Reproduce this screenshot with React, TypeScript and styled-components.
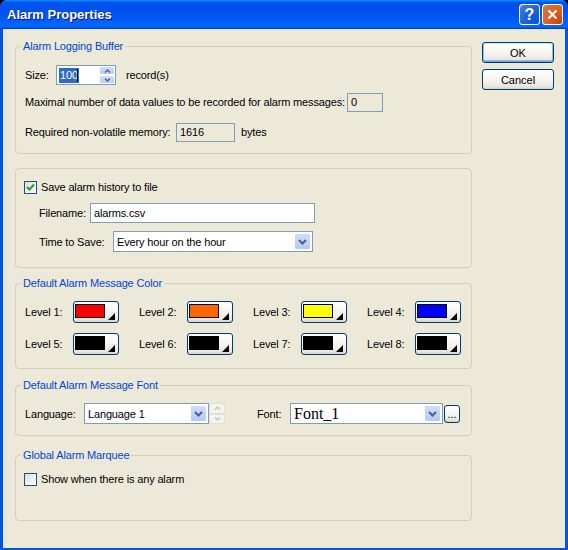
import React from 'react';
import styled, { createGlobalStyle, css } from 'styled-components';

const FONT = `"Liberation Sans", Arial, sans-serif`;

const GlobalStyle = createGlobalStyle`
  html, body {
    margin: 0;
    padding: 0;
    background: #000;
  }
  body {
    width: 568px;
    height: 550px;
    overflow: hidden;
  }
`;

const Window = styled.div`
  width: 568px;
  height: 550px;
  display: flex;
  flex-direction: column;
  background: #0054e3;
  border-radius: 7px 7px 0 0;
  overflow: hidden;
  font-family: ${FONT};
  font-size: 11px;
  letter-spacing: -0.15px;
  color: #000;
`;

const TitleBar = styled.div`
  height: 29px;
  flex: none;
  display: flex;
  align-items: center;
  padding: 0 5px 0 7px;
  background: linear-gradient(180deg, #0997ff, #0053ee 8%, #0050ee 40%, #06f 88%, #06f 93%, #005bff 95%, #003dd7 96%, #003dd7);
`;

const TitleText = styled.div`
  flex: 1;
  color: #fff;
  font: bold 13px ${FONT};
  text-shadow: 1px 1px #0f1089;
  letter-spacing: 0;
`;

const TitleButton = styled.div<{ $kind: 'help' | 'close' }>`
  width: 21px;
  height: 21px;
  box-sizing: border-box;
  margin-left: 2px;
  border: 1px solid #fff;
  border-radius: 3px;
  display: flex;
  align-items: center;
  justify-content: center;
  color: #fff;
  font: bold 16px ${FONT};
  letter-spacing: 0;
  ${p => p.$kind === 'help'
    ? css`background: radial-gradient(circle at 90% 90%, #0054e9 0%, #2263d5 55%, #4479e4 90%, #fff 100%);`
    : css`background: radial-gradient(circle at 90% 90%, #cc4600 0%, #dc6527 55%, #cd7546 90%, #fff 100%);`}
`;

const Body = styled.div`
  flex: 1;
  margin: 0 3px 2px;
  background: #ece9d8;
  display: flex;
  gap: 10px;
  padding-left: 12px;
`;

const LeftColumn = styled.div`
  width: 457px;
  display: flex;
  flex-direction: column;
`;

const RightColumn = styled.div`
  display: flex;
  flex-direction: column;
  gap: 6px;
  padding-top: 13px;
`;

const Group = styled.fieldset<{ $top: number; $h: number }>`
  box-sizing: border-box;
  margin: ${p => p.$top}px 0 0;
  height: ${p => p.$h}px;
  border: 1px solid #d0d0bf;
  border-radius: 4px;
  padding: 0 8px 0 9px;
  min-width: 0;
`;

const Legend = styled.legend`
  color: #0046d5;
  font: 11px ${FONT};
  letter-spacing: -0.15px;
  line-height: 14px;
  padding: 0 2px;
  margin-left: -4px;
`;

const Row = styled.div<{ $top: number; $h: number; $indent?: number }>`
  display: flex;
  align-items: center;
  height: ${p => p.$h}px;
  margin-top: ${p => p.$top}px;
  padding-left: ${p => p.$indent || 0}px;
  white-space: nowrap;
`;

const Label = styled.span<{ $w?: number; $gap?: number }>`
  flex: none;
  ${p => p.$w && css`width: ${p.$w}px;`}
  margin-left: ${p => p.$gap || 0}px;
`;

const Field = styled.div<{ $w: number; $h: number; $readOnly?: boolean }>`
  box-sizing: border-box;
  width: ${p => p.$w}px;
  height: ${p => p.$h}px;
  border: 1px solid #7f9db9;
  background: ${p => (p.$readOnly ? '#ece9d8' : '#fff')};
  display: flex;
  align-items: center;
  padding-left: 3px;
  flex: none;
`;

const Selected = styled.span`
  background: #316ac5;
  color: #fff;
  line-height: 15px;
  padding: 0 1px;
  margin-left: -1px;
`;

const Caret = styled.span`
  width: 1px;
  height: 13px;
  background: #000;
  margin-left: -2px;
`;

const Spacer = styled.div`
  flex: 1;
`;

const SpinStack = styled.div`
  display: flex;
  flex-direction: column;
  height: 100%;
`;

const SpinHalf = styled.div<{ $disabled?: boolean }>`
  box-sizing: border-box;
  width: 16px;
  flex: 1;
  display: flex;
  align-items: center;
  justify-content: center;
  border: 1px solid ${p => (p.$disabled ? '#e2e0d6' : '#fff')};
  border-radius: 2px;
  background: ${p => (p.$disabled ? '#f4f3ee' : 'linear-gradient(180deg, #d3defb, #b6cbf9)')};
`;

const ComboArrow = styled.div`
  box-sizing: border-box;
  width: 17px;
  height: calc(100% - 2px);
  margin: 1px;
  border: 1px solid #fff;
  border-radius: 2px;
  background: linear-gradient(180deg, #d0ddfc, #b5c9f7);
  display: flex;
  align-items: center;
  justify-content: center;
`;

const XPButton = styled.button<{ $w: number; $h: number; $default?: boolean }>`
  box-sizing: border-box;
  width: ${p => p.$w}px;
  height: ${p => p.$h}px;
  flex: none;
  border: 1px solid #003c74;
  border-radius: 3px;
  background: linear-gradient(180deg, #fff, #f3f2ee 60%, #e8e6dd 88%, #d6d0c5);
  font: 11px ${FONT};
  color: #000;
  padding: 0;
  display: flex;
  align-items: center;
  justify-content: center;
  position: relative;
  ${p => p.$default && css`
    box-shadow: inset 0 1px #cee7ff, inset 1px 0 #98b8ea, inset -1px 0 #98b8ea, inset 0 -1px #69a1e8, inset 0 -2px #98b8ea;
  `}
`;

const Swatch = styled.div<{ $color: string }>`
  width: 30px;
  height: 14px;
  box-sizing: border-box;
  border: 1px solid #000;
  background: ${p => p.$color};
  margin: -2px 9px 0 -3px;
`;

const Corner = styled.svg`
  position: absolute;
  right: 3px;
  bottom: 2px;
`;

const ColorGrid = styled.div`
  display: grid;
  grid-template-columns: repeat(4, 114px);
  row-gap: 10px;
  margin-top: 11px;
`;

const ColorCell = styled.div`
  display: flex;
  align-items: center;
  height: 22px;
`;

const CheckBox = styled.div`
  box-sizing: border-box;
  width: 13px;
  height: 13px;
  border: 1px solid #1c5180;
  background: linear-gradient(135deg, #dcdcd7, #fff);
  margin: 0 4px 0 -1px;
  display: flex;
  align-items: center;
  justify-content: center;
  flex: none;
`;

const SerifValue = styled.span`
  font: 16px "Liberation Serif", "Times New Roman", serif;
  letter-spacing: 0;
`;

const Chevron = () => (
  <svg width="9" height="6" viewBox="0 0 9 6">
    <polyline points="1,1 4.5,4.5 8,1" fill="none" stroke="#4d6185" strokeWidth="2" />
  </svg>
);

const SpinArrow = ({ up, color }: { up: boolean; color: string }) => (
  <svg width="7" height="4" viewBox="0 0 7 4">
    <polyline points={up ? '1,3.5 3.5,1 6,3.5' : '1,0.5 3.5,3 6,0.5'} fill="none" stroke={color} strokeWidth="1.4" />
  </svg>
);

const Combo = ({ w, children }: { w: number; children: React.ReactNode }) => (
  <Field $w={w} $h={21}>
    {children}
    <Spacer />
    <ComboArrow><Chevron /></ComboArrow>
  </Field>
);

const ColorButton = ({ color }: { color: string }) => (
  <XPButton $w={46} $h={22}>
    <Swatch $color={color} />
    <Corner width="7" height="7" viewBox="0 0 7 7">
      <polygon points="0,7 7,7 7,0" fill="#000" />
    </Corner>
  </XPButton>
);

const Check = ({ checked }: { checked: boolean }) => (
  <CheckBox>
    {checked && (
      <svg width="9" height="9" viewBox="0 0 9 9">
        <polyline points="1,4 3.5,6.5 8,1.5" fill="none" stroke="#21a121" strokeWidth="2" />
      </svg>
    )}
  </CheckBox>
);

const levels = ['#ff0000', '#ff6600', '#ffff00', '#0000ff', '#000', '#000', '#000', '#000'];

export default function App() {
  return (
    <Window>
      <GlobalStyle />
      <TitleBar>
        <TitleText>Alarm Properties</TitleText>
        <TitleButton $kind="help">?</TitleButton>
        <TitleButton $kind="close">
          <svg width="11" height="11" viewBox="0 0 11 11">
            <path d="M1.5 1.5 L9.5 9.5 M9.5 1.5 L1.5 9.5" stroke="#fff" strokeWidth="2.2" />
          </svg>
        </TitleButton>
      </TitleBar>
      <Body>
        <LeftColumn>
          <Group $top={10} $h={115}>
            <Legend>Alarm Logging Buffer</Legend>
            <Row $top={12} $h={20}>
              <Label $w={31}>Size:</Label>
              <Field $w={60} $h={20}>
                <Selected>100</Selected>
                <Caret />
                <Spacer />
                <SpinStack>
                  <SpinHalf><SpinArrow up color="#4d6185" /></SpinHalf>
                  <SpinHalf><SpinArrow up={false} color="#4d6185" /></SpinHalf>
                </SpinStack>
              </Field>
              <Label $gap={10}>record(s)</Label>
            </Row>
            <Row $top={7} $h={20}>
              <Label $w={322}>Maximal number of data values to be recorded for alarm messages:</Label>
              <Field $w={36} $h={19} $readOnly>0</Field>
            </Row>
            <Row $top={10} $h={20}>
              <Label $w={151}>Required non-volatile memory:</Label>
              <Field $w={59} $h={19} $readOnly>1616</Field>
              <Label $gap={6}>bytes</Label>
            </Row>
          </Group>

          <Group $top={14} $h={100}>
            <Row $top={10} $h={16}>
              <Check checked />
              <Label>Save alarm history to file</Label>
            </Row>
            <Row $top={8} $h={20} $indent={14}>
              <Label $w={51}>Filename:</Label>
              <Field $w={225} $h={20}>alarms.csv</Field>
            </Row>
            <Row $top={8} $h={21} $indent={14}>
              <Label $w={74}>Time to Save:</Label>
              <Combo w={200}>Every hour on the hour</Combo>
            </Row>
          </Group>

          <Group $top={8} $h={93}>
            <Legend>Default Alarm Message Color</Legend>
            <ColorGrid>
              {levels.map((c, i) => (
                <ColorCell key={i}>
                  <Label $w={48}>Level {i + 1}:</Label>
                  <ColorButton color={c} />
                </ColorCell>
              ))}
            </ColorGrid>
          </Group>

          <Group $top={9} $h={58}>
            <Legend>Default Alarm Message Font</Legend>
            <Row $top={11} $h={21}>
              <Label $w={59}>Language:</Label>
              <Combo w={125}>Language 1</Combo>
              <SpinStack>
                <SpinHalf $disabled><SpinArrow up color="#c5c2b2" /></SpinHalf>
                <SpinHalf $disabled><SpinArrow up={false} color="#c5c2b2" /></SpinHalf>
              </SpinStack>
              <Label $w={33} $gap={32}>Font:</Label>
              <Combo w={153}><SerifValue>Font_1</SerifValue></Combo>
              <XPButton $w={16} $h={18} style={{ marginLeft: 1 }}>...</XPButton>
            </Row>
          </Group>

          <Group $top={12} $h={73}>
            <Legend>Global Alarm Marquee</Legend>
            <Row $top={9} $h={16}>
              <Check checked={false} />
              <Label>Show when there is any alarm</Label>
            </Row>
          </Group>
        </LeftColumn>

        <RightColumn>
          <XPButton $w={72} $h={21} $default>OK</XPButton>
          <XPButton $w={72} $h={21}>Cancel</XPButton>
        </RightColumn>
      </Body>
    </Window>
  );
}
